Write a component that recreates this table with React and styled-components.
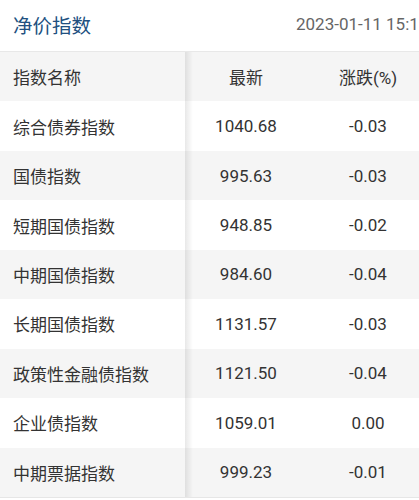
import React from "react";
import styled, { createGlobalStyle } from "styled-components";

const Global = createGlobalStyle`
  html, body { margin: 0; padding: 0; background: #fff; overflow: hidden; }
  body { font-family: Roboto, "Noto Sans CJK SC", sans-serif; color: #333; }
`;

const Page = styled.div`
  width: 419px;
  overflow: hidden;
`;

const Header = styled.div`
  display: flex;
  align-items: center;
  justify-content: space-between;
  height: 51px;
  border-bottom: 1px solid #e8e8e8;
  padding-left: 13px;
  white-space: nowrap;
  overflow: hidden;
`;

const Title = styled.div`
  font-size: 19.5px;
  color: #21507f;
  letter-spacing: 0;
  margin-top: -3px;
`;

const DateText = styled.div`
  font-size: 17px;
  color: #666;
  margin-right: -70px;
  width: 193px;
  flex: none;
  margin-top: -3px;
`;

const Scroller = styled.div`
  overflow: hidden;
  border-bottom: 1px solid #e6e6e6;
`;

const Table = styled.div`
  width: 429px;
  display: grid;
  grid-template-columns: 185px 122px 122px;
`;

const Row = styled.div`
  display: contents;
`;

const Cell = styled.div`
  height: 49.45px;
  display: flex;
  align-items: center;
  justify-content: ${(p) => (p.$first ? "flex-start" : "center")};
  padding-left: ${(p) => (p.$first ? "13px" : "0")};
  font-size: 17px;
  color: #333;
  background: ${(p) => (p.$gray ? "#f5f5f5" : "#fff")};
  position: relative;
  white-space: nowrap;
  box-sizing: border-box;
  ${(p) =>
    p.$first &&
    `
    z-index: 1;
    &::after {
      content: "";
      position: absolute;
      top: 0;
      bottom: 0;
      right: -8px;
      width: 8px;
      background: linear-gradient(to right, rgba(0,0,0,0.09), rgba(0,0,0,0));
      pointer-events: none;
    }
  `}
`;

const rows = [
  ["综合债券指数", "1040.68", "-0.03"],
  ["国债指数", "995.63", "-0.03"],
  ["短期国债指数", "948.85", "-0.02"],
  ["中期国债指数", "984.60", "-0.04"],
  ["长期国债指数", "1131.57", "-0.03"],
  ["政策性金融债指数", "1121.50", "-0.04"],
  ["企业债指数", "1059.01", "0.00"],
  ["中期票据指数", "999.23", "-0.01"],
];

export default function App() {
  return (
    <Page>
      <Global />
      <Header>
        <Title>净价指数</Title>
        <DateText>2023-01-11 15:16:30</DateText>
      </Header>
      <Scroller>
        <Table>
          <Row>
            <Cell $first $gray>指数名称</Cell>
            <Cell $gray>最新</Cell>
            <Cell $gray>涨跌(%)</Cell>
          </Row>
          {rows.map((r, i) => {
            const gray = i % 2 === 1;
            return (
              <Row key={r[0]}>
                <Cell $first $gray={gray}>{r[0]}</Cell>
                <Cell $gray={gray}>{r[1]}</Cell>
                <Cell $gray={gray}>{r[2]}</Cell>
              </Row>
            );
          })}
        </Table>
      </Scroller>
    </Page>
  );
}
